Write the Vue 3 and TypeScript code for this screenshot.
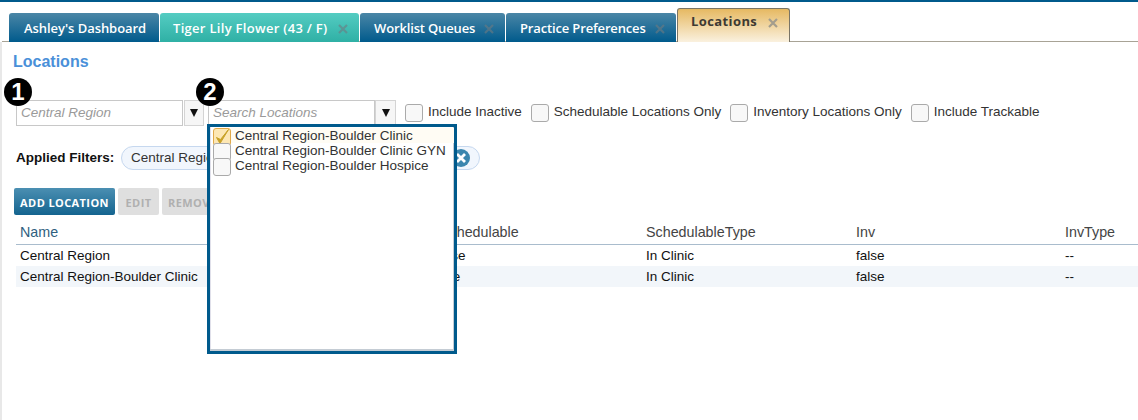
<script setup lang="ts">
interface Tab { label: string; kind: string; close: boolean }
const tabs: Tab[] = [
  { label: "Ashley's Dashboard", kind: 'blue home', close: false },
  { label: 'Tiger Lily Flower (43 / F)', kind: 'teal', close: true },
  { label: 'Worklist Queues', kind: 'blue queues', close: true },
  { label: 'Practice Preferences', kind: 'blue prefs', close: true },
  { label: 'Locations', kind: 'gold', close: true },
]
const checks = ['Include Inactive', 'Schedulable Locations Only', 'Inventory Locations Only', 'Include Trackable']
const options = [
  { label: 'Central Region-Boulder Clinic', on: true },
  { label: 'Central Region-Boulder Clinic GYN', on: false },
  { label: 'Central Region-Boulder Hospice', on: false },
]
const rows = [
  ['Central Region', 'false', 'In Clinic', 'false', '--'],
  ['Central Region-Boulder Clinic', 'true', 'In Clinic', 'false', '--'],
]
</script>

<template>
  <div class="page">
    <div class="tabbar">
      <div v-for="t in tabs" :key="t.label" class="tab" :class="t.kind">
        <span>{{ t.label }}</span>
        <svg v-if="t.close" class="x" width="10" height="10" viewBox="0 0 10 10">
          <path d="M1 1 L9 9 M9 1 L1 9" stroke-width="2.2" fill="none" />
        </svg>
      </div>
    </div>
    <main class="content">
      <h1>Locations</h1>
      <div class="filters">
        <div class="combo first">
          <span class="badge">1</span>
          <div class="input">Central Region</div>
          <div class="arrow"><i></i></div>
        </div>
        <div class="combo second">
          <span class="badge">2</span>
          <div class="input">Search Locations</div>
          <div class="arrow"><i></i></div>
          <div class="dropdown">
            <div v-for="o in options" :key="o.label" class="opt" :class="{ picked: o.on }">
              <span class="box" :class="{ on: o.on }">
                <svg v-if="o.on" width="18" height="18" viewBox="0 0 18 18">
                  <path d="M3.5 9.5 L7 15.5 L15.5 1.5 L7.5 11.5 Z" fill="#c9a227" stroke="#c9a227" stroke-width="1" stroke-linejoin="round" />
                </svg>
              </span>
              <span class="opt-label">{{ o.label }}</span>
            </div>
          </div>
        </div>
        <label v-for="c in checks" :key="c" class="check">
          <span class="box"></span>
          <span>{{ c }}</span>
        </label>
      </div>
      <div class="applied">
        <b>Applied Filters:</b>
        <div class="chip">
          <span>Central Region</span>
          <span class="chip-x">
            <svg width="12" height="12" viewBox="0 0 12 12"><path d="M2 2 L10 10 M10 2 L2 10" stroke="#fff" stroke-width="2.8" /></svg>
          </span>
        </div>
      </div>
      <div class="actions">
        <button class="primary">ADD LOCATION</button>
        <button class="off edit">EDIT</button>
        <button class="off">REMOVE</button>
      </div>
      <div class="table">
        <div class="tr head">
          <div>Name</div><div class="sched">Schedulable</div><div>SchedulableType</div><div>Inv</div><div>InvType</div>
        </div>
        <div v-for="(r, i) in rows" :key="i" class="tr" :class="{ alt: i === 1 }">
          <div v-for="(c, j) in r" :key="j">{{ c }}</div>
        </div>
      </div>
    </main>
  </div>
</template>

<style>
html, body { margin: 0; background: #fff; overflow: hidden; }
</style>

<style scoped>
.page {
  width: 1138px;
  height: 420px;
  box-sizing: border-box;
  border-top: 2px solid #005a8c;
  font-family: "Liberation Sans", Arial, sans-serif;
  font-size: 13.5px;
  color: #111;
  background: #fff;
  overflow: hidden;
}
.tabbar {
  display: flex;
  align-items: flex-end;
  gap: 1px;
  height: 33px;
  margin-top: 6px;
  margin-left: 2px;
  padding-left: 7px;
  border-bottom: 1px solid #a8a396;
  font-family: "Open Sans", sans-serif;
  font-size: 13px;
  font-weight: 600;
}
.tab {
  box-sizing: border-box;
  height: 29px;
  margin-bottom: -1px;
  display: flex;
  align-items: center;
  padding-left: 14px;
  color: #fff;
  border-radius: 3px 3px 0 0;
  white-space: nowrap;
}
.tab.blue { background: linear-gradient(#4a86a6, #005a8c); }
.tab.home { width: 150px; padding-left: 15px; letter-spacing: -.05px; }
.tab.queues { width: 145px; letter-spacing: -.15px; }
.tab.prefs { width: 170px; letter-spacing: -.15px; }
.tab.teal {
  width: 199px;
  padding-left: 13px;
  letter-spacing: .3px;
  background: linear-gradient(#54ccc2, #2fb0a5);
}
.tab.gold {
  width: 113px;
  height: 34px;
  align-items: flex-start;
  padding: 3px 0 0 13px;
  font-weight: 700;
  letter-spacing: .4px;
  color: #3d3a33;
  background: linear-gradient(#e6b962, #faf1df);
  border: 1px solid #7a7566;
  border-bottom: none;
}
.x { margin-left: auto; margin-right: 11px; margin-top: 2px; stroke: rgba(110, 122, 128, .6); }
.tab.gold .x { stroke: #a39d8d; margin-top: 6px; }
.content {
  margin-left: 2px;
  box-shadow: -2px 0 0 #e8e8e8;
  height: 378px;
  box-sizing: border-box;
  padding: 10px 0 0 12px;
  position: relative;
}
h1 {
  margin: 0 0 0 -1px;
  font-size: 16px;
  line-height: 19px;
  font-weight: 700;
  color: #4a90d9;
}
.filters {
  display: flex;
  align-items: flex-start;
  margin-top: 29px;
  padding-left: 2px;
}
.combo { position: relative; display: flex; height: 26px; }
.combo.first { width: 192px; }
.input {
  box-sizing: border-box;
  width: 167px;
  height: 26px;
  border: 1px solid #c8c8c8;
  padding: 0 4px;
  line-height: 23px;
  font-style: italic;
  color: #9a9a9a;
}
.arrow {
  box-sizing: border-box;
  width: 20px;
  height: 26px;
  margin-left: 1px;
  border: 1px solid #d4d4d4;
  background: #f6f6f6;
  display: flex;
  align-items: center;
  justify-content: center;
}
.second .arrow { margin-left: 0; width: 21px; }
.arrow i {
  width: 0;
  height: 0;
  border-left: 4px solid transparent;
  border-right: 4px solid transparent;
  border-top: 8px solid #111;
}
.badge {
  position: absolute;
  left: -12px;
  top: -22px;
  width: 28px;
  height: 28px;
  border-radius: 50%;
  background: #000;
  color: #fff;
  font-weight: 700;
  font-size: 24px;
  line-height: 28px;
  text-align: center;
  z-index: 2;
}
.second { width: 188px; margin-right: 9px; }
.box {
  box-sizing: border-box;
  display: block;
  flex: none;
  width: 18px;
  height: 18px;
  border: 1px solid #aaa;
  border-radius: 3px;
  background: #f8f8f8;
}
.box.on { background: #fde7b4; border-color: #e0a94a; }
.box svg { display: block; margin: -1px; }
.check {
  display: flex;
  align-items: flex-start;
  gap: 5px;
  margin-right: 9px;
  padding-top: 4px;
  line-height: 15px;
  color: #333;
}
.dropdown {
  position: absolute;
  left: -1px;
  top: 24px;
  width: 250px;
  height: 230px;
  box-sizing: border-box;
  border: 3px solid #005a8c;
  background: #fff;
  box-shadow: inset -1px -2px 0 #c4ccd4, inset 1px 0 0 #e0e0ea;
  padding: 1px 0 0 3px;
  z-index: 3;
}
.opt { display: flex; height: 15px; }
.opt.picked { background: #fffcf4; }
.opt .box { margin-right: 4px; }
.opt-label { line-height: 15px; color: #333; }
.applied {
  display: flex;
  align-items: center;
  margin-top: 20px;
  padding-left: 2px;
  height: 24px;
}
.applied b { width: 105px; margin-top: -1px; }
.chip {
  box-sizing: border-box;
  width: 359px;
  height: 24px;
  border: 1px solid #c6d8ef;
  border-radius: 12px;
  background: #f1f6fd;
  display: flex;
  align-items: center;
  justify-content: space-between;
  padding: 0 9px 1px;
  color: #333;
}
.chip-x {
  width: 18px;
  height: 18px;
  border-radius: 50%;
  background: #3b86ae;
  display: flex;
  align-items: center;
  justify-content: center;
}
.actions {
  display: flex;
  gap: 3px;
  margin-top: 18px;
}
button {
  height: 27px;
  border: 0;
  border-radius: 2px;
  padding: 1px 6px 0;
  font-family: "Open Sans", sans-serif;
  font-size: 11px;
  font-weight: 700;
  letter-spacing: .4px;
}
.primary { width: 101px; color: #fff; background: linear-gradient(#4b8fb2, #14648f); }
.off { color: #b0b0b0; background: #dfdfdf; }
.edit { width: 41px; }
.table { margin: 6px 0 0 2px; width: 1122px; }
.tr {
  display: grid;
  grid-template-columns: 417px 209px 210px 209px 73px;
  height: 21px;
  line-height: 21px;
  padding-left: 4px;
  box-sizing: border-box;
}
.tr.head {
  height: 24px;
  line-height: 22px;
  font-size: 14.3px;
  border-bottom: 1px solid #a9bccd;
  color: #444;
}
.tr.head > div:first-child { color: #2f5f7f; }
.sched { padding-left: 3px; }
.tr.alt { background: #f2f6fa; }
</style>
